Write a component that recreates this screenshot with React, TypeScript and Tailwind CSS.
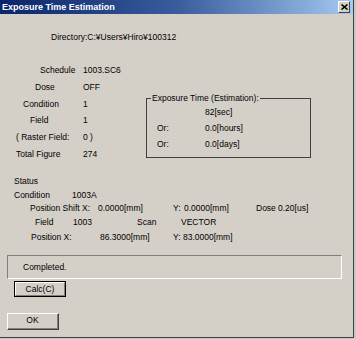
import React from "react";

const Row = ({ className, children }: { className: string; children: React.ReactNode }) => (
    <div className={"flex items-center whitespace-nowrap " + className}>{children}</div>
);

export default function App() {
    return (
        <div className="w-[356px] h-[339px] overflow-hidden bg-[#c8c8c8] font-['Liberation_Sans',Arial,sans-serif] text-[8.5px] text-black">
            <div className="w-[354px] h-[338px] bg-[#d4d0c8] border-r border-b border-[#404040] flex flex-col">
                {/* title bar */}
                <div className="h-[14px] shrink-0 flex items-center justify-between pl-[2px] pr-[3px] bg-gradient-to-r from-[#0a246a] via-[#3a5c9c] to-[#a6caf0]">
                    <span className="text-[9px] font-bold text-white leading-[14px]">Exposure Time Estimation</span>
                    <div className="w-[12px] h-[12px] bg-[#d4d0c8] border-t border-l border-white border-r border-b border-r-[#404040] border-b-[#404040] flex items-center justify-center">
                        <svg width="7" height="6" viewBox="0 0 7 6">
                            <path d="M0.5 0.5 L6.5 5.5 M6.5 0.5 L0.5 5.5" stroke="#000" strokeWidth="1.6" />
                        </svg>
                    </div>
                </div>

                <Row className="mt-[17px] h-[12px] pl-[51px]">Directory:C:¥Users¥Hiro¥100312</Row>

                {/* schedule + estimation */}
                <div className="flex mt-[19.35px]">
                    <div className="w-[146px] shrink-0 flex flex-col">
                        <Row className="h-[16.7px]"><span className="w-[83px] pl-[40px]">Schedule</span><span>1003.SC6</span></Row>
                        <Row className="h-[16.7px]"><span className="w-[83px] pl-[35px]">Dose</span><span>OFF</span></Row>
                        <Row className="h-[16.7px]"><span className="w-[83px] pl-[23px]">Condition</span><span>1</span></Row>
                        <Row className="h-[16.7px]"><span className="w-[83px] pl-[30px]">Field</span><span>1</span></Row>
                        <Row className="h-[16.7px]"><span className="w-[83px] pl-[16px]">( Raster Field:</span><span>0 )</span></Row>
                        <Row className="h-[16.7px]"><span className="w-[83px] pl-[16px]">Total Figure</span><span>274</span></Row>
                    </div>
                    <div className="relative mt-[35.65px] w-[165px] h-[60px] border border-[#404040] pt-[5px]">
                        <span className="absolute left-[4px] top-[-7px] px-[1px] leading-[12px] bg-[#d4d0c8]">Exposure Time (Estimation):</span>
                        <Row className="h-[16px] pl-[10px]"><span className="w-[48px]"></span><span>82[sec]</span></Row>
                        <Row className="h-[16px] pl-[10px]"><span className="w-[48px]">Or:</span><span>0.0[hours]</span></Row>
                        <Row className="h-[16px] pl-[10px]"><span className="w-[48px]">Or:</span><span>0.0[days]</span></Row>
                    </div>
                </div>

                {/* status */}
                <Row className="mt-[13.15px] h-[12px] pl-[14px]">Status</Row>
                <Row className="mt-[1.6px] h-[12px] pl-[14px]"><span className="w-[58px]">Condition</span><span>1003A</span></Row>
                <Row className="mt-[1.4px] h-[12px] pl-[30px]">
                    <span className="w-[68px]">Position Shift X:</span>
                    <span className="w-[75px]">0.0000[mm]</span>
                    <span className="w-[11px]">Y:</span>
                    <span className="w-[72px]">0.0000[mm]</span>
                    <span className="w-[22px]">Dose</span>
                    <span>0.20[us]</span>
                </Row>
                <Row className="mt-[2px] h-[12px] pl-[35px]">
                    <span className="w-[38px]">Field</span>
                    <span className="w-[64px]">1003</span>
                    <span className="w-[44px]">Scan</span>
                    <span>VECTOR</span>
                </Row>
                <Row className="mt-[3px] h-[12px] pl-[31px]">
                    <span className="w-[69px]">Position X:</span>
                    <span className="w-[73px]">86.3000[mm]</span>
                    <span>Y: 83.0000[mm]</span>
                </Row>

                {/* message box */}
                <div className="mt-[11.3px] ml-[7px] w-[335px] h-[24px] border-t border-l border-[#808080] border-r border-b border-r-white border-b-white flex items-center pl-[15px]">
                    Completed.
                </div>

                <button className="mt-[2px] ml-[14px] w-[52px] h-[16px] border border-black bg-[#d4d0c8] p-0">
                    <div className="w-full h-full border-t border-l border-white border-r border-b border-r-[#808080] border-b-[#808080] flex items-center justify-center leading-none">
                        Calc(C)
                    </div>
                </button>

                <button className="mt-[15.7px] ml-[7px] w-[52px] h-[17px] border-t border-l border-white border-r border-b border-r-[#404040] border-b-[#404040] bg-[#d4d0c8] p-0">
                    <div className="w-full h-full border-r border-b border-[#808080] flex items-center justify-center leading-none">
                        OK
                    </div>
                </button>
            </div>
        </div>
    );
}
